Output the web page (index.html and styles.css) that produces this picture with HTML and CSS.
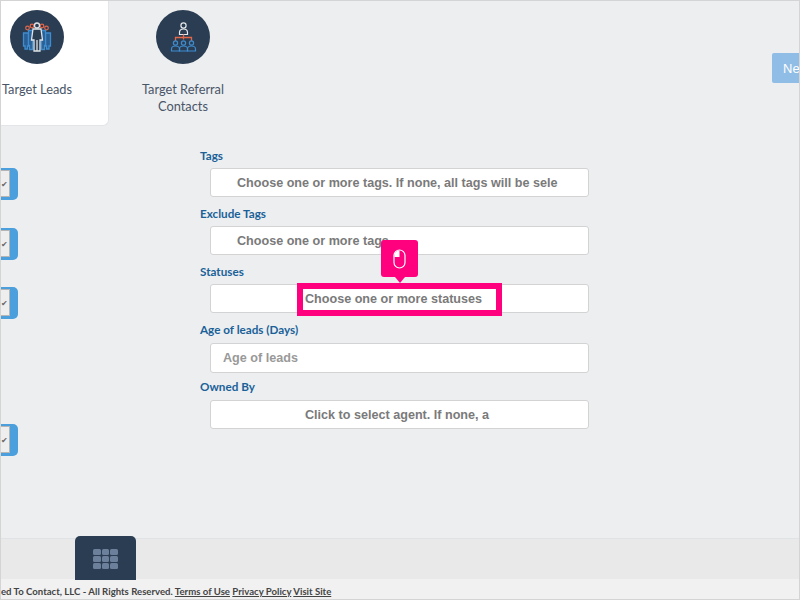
FILE: index.html
```html
<!DOCTYPE html>
<html lang="en">
<head>
    <meta charset="UTF-8">
    <meta name="viewport" content="width=device-width, initial-scale=1.0">
    <title>Target Leads</title>
    <link rel="stylesheet" href="styles.css">
</head>
<body>
    <div class="screen">
        <!-- Top tabs -->
        <div class="top">
            <div class="tabs">
                <div class="tab active">
                    <div class="tab-icon">
                        <svg width="54" height="54" viewBox="0 0 54 54" fill="none">
                            <g stroke="#e2674a" stroke-width="1.2">
                                <circle cx="17.500" cy="18" r="1.800"/>
                                <circle cx="22" cy="16" r="1.800"/>
                                <circle cx="32" cy="16" r="1.800"/>
                                <circle cx="36.500" cy="18" r="1.800"/>
                            </g>
                            <g stroke="#3f8ccf" stroke-width="1.300" fill="#2a5f94">
                                <path d="M13.500 23h5v13h-1v3h-2.500v-3h-1.500z"/>
                                <path d="M40.500 23h-5v13h1v3h2.500v-3h1.500z"/>
                                <path d="M18.500 20.500h4v19h-3v-4h-1z"/>
                                <path d="M35.500 20.500h-4v19h3v-4h1z"/>
                            </g>
                            <g stroke="#dfe3e8" stroke-width="1.300">
                                <circle cx="27" cy="15.500" r="2.500"/>
                                <path d="M23 19h8l1.500 11h-2.500v11h-6v-11h-2.500z" fill="#2b3d52"/>
                                <path d="M27 30v11"/>
                            </g>
                        </svg>
                    </div>
                    <div class="tab-label">Target Leads</div>
                </div>
                <div class="tab">
                    <div class="tab-icon">
                        <svg width="54" height="54" viewBox="0 0 54 54" fill="none">
                            <g stroke="#e4e7eb" stroke-width="1.200">
                                <circle cx="27.500" cy="15.500" r="2.600"/>
                                <path d="M23.500 24.500v-2c0-2 1.500-3.500 4-3.500s4 1.500 4 3.500v2z"/>
                            </g>
                            <path d="M27.500 24.500v5M19.500 31v-3.500h16v3.500" stroke="#e2674a" stroke-width="1.300"/>
                            <g stroke="#3f8ccf" stroke-width="1.200">
                                <circle cx="19.500" cy="33" r="2.100"/>
                                <circle cx="27.500" cy="33" r="2.100"/>
                                <circle cx="35.500" cy="33" r="2.100"/>
                                <path d="M15.500 41v-2c0-2 1.500-3 4-3s4 1 4 3v2z"/>
                                <path d="M23.500 41v-2c0-2 1.500-3 4-3s4 1 4 3v2z"/>
                                <path d="M31.500 41v-2c0-2 1.500-3 4-3s4 1 4 3v2z"/>
                            </g>
                        </svg>
                    </div>
                    <div class="tab-label">Target Referral<br>Contacts</div>
                </div>
            </div>
            <button class="next-btn">Ne</button>
        </div>

        <!-- Form area -->
        <div class="main">
            <div class="toggles">
                <div class="toggle"><span class="toggle-box">&#10004;</span></div>
                <div class="toggle"><span class="toggle-box">&#10004;</span></div>
                <div class="toggle"><span class="toggle-box">&#10004;</span></div>
                <div class="toggle toggle-last"><span class="toggle-box">&#10004;</span></div>
            </div>
            <div class="form">
                <div class="form-group">
                    <div class="form-label">Tags</div>
                    <div class="field indent-small">Choose one or more tags. If none, all tags will be sele</div>
                </div>
                <div class="form-group">
                    <div class="form-label">Exclude Tags</div>
                    <div class="field indent-small">Choose one or more tags</div>
                </div>
                <div class="form-group">
                    <div class="form-label">Statuses</div>
                    <div class="field indent-large">Choose one or more statuses</div>
                    <div class="highlight"></div>
                    <div class="hint">
                        <svg width="14" height="20" viewBox="0 0 14 20" fill="none">
                            <rect x="1" y="1" width="11" height="18" rx="5.500" stroke="#fff" stroke-width="1.200"/>
                            <path d="M6.500 1.500v6.500H1.500V6.500a5 5 0 0 1 5-5z" fill="#fff"/>
                        </svg>
                    </div>
                </div>
                <div class="form-group">
                    <div class="form-label form-label-tall">Age of leads (Days)</div>
                    <div class="field field-input">Age of leads</div>
                </div>
                <div class="form-group form-group-last">
                    <div class="form-label form-label-tall">Owned By</div>
                    <div class="field indent-large">Click to select agent. If none, a</div>
                </div>
            </div>
        </div>

        <!-- Bottom bar -->
        <div class="bottom-bar">
            <div class="grid-btn">
                <div class="grid-icon">
                    <i></i><i></i><i></i><i></i><i></i><i></i><i></i><i></i><i></i>
                </div>
            </div>
        </div>
        <div class="footer">
            <span class="footer-text">ed To Contact, LLC - All Rights Reserved. <a href="#">Terms of Use</a> <a href="#">Privacy Policy</a> <a href="#">Visit Site</a></span>
        </div>
    </div>
</body>
</html>
```

FILE: styles.css
```css
* {
    box-sizing: border-box;
}
html, body {
    margin: 0;
    padding: 0;
    overflow: hidden;
}
body {
    font-family: Lato, "Open Sans", sans-serif;
    background-color: #eceef0;
}
.screen {
    width: 800px;
    height: 600px;
    display: flex;
    flex-direction: column;
    overflow: hidden;
    border: 1px solid #d4d4d4;
}
.top {
    display: flex;
    justify-content: space-between;
    align-items: flex-start;
    height: 125px;
    flex-shrink: 0;
}
.tabs {
    display: flex;
    gap: 3px;
    margin-left: -35px;
}
.tab {
    width: 142px;
    height: 125px;
    padding-top: 9px;
    text-align: center;
}
.tab.active {
    width: 143px;
    padding-right: 1px;
    background: #ffffff;
    border-radius: 0 0 6px 0;
    border: 1px solid #e3e5e8;
    border-top: none;
}
.tab-icon {
    width: 54px;
    height: 54px;
    margin: 0 auto;
    border-radius: 50%;
    background: #2b3d52;
}
.tab-label {
    margin-top: 17px;
    font-size: 12.800px;
    line-height: 17px;
    color: #4a5568;
}
.next-btn {
    width: 34px;
    height: 30px;
    margin-top: 52px;
    margin-right: -7px;
    padding: 0 0 0 11px;
    border: none;
    border-radius: 2px;
    text-align: left;
    font-family: "Liberation Sans", Arial, sans-serif;
    font-size: 13px;
    color: #ffffff;
    background-color: #90bde6;
}
.main {
    flex: 1;
    display: flex;
    min-height: 0;
}
.toggles {
    width: 199px;
    padding-top: 42px;
    flex-shrink: 0;
}
.toggle {
    width: 18px;
    height: 32px;
    margin-left: -1px;
    margin-bottom: 27.500px;
    padding-top: 2px;
    background: #4a9fdc;
    border-radius: 0 5px 5px 0;
}
.toggle-last {
    margin-top: 104.500px;
}
.toggle-box {
    display: block;
    width: 10px;
    height: 27px;
    padding-left: 1px;
    line-height: 26px;
    font-size: 8px;
    text-align: left;
    color: #666666;
    background: #eeeeee;
    border: 1px solid #b5b5b5;
    border-left: none;
}
.form {
    width: 390px;
    padding-top: 22px;
}
.form-group {
    position: relative;
    height: 58px;
}
.form-group-last {
    margin-top: -1px;
}
.form-label {
    height: 20px;
    font-size: 11.700px;
    font-weight: 700;
    line-height: 15px;
    color: #1a6198;
}
.form-label-tall {
    height: 21px;
}
.field {
    margin-left: 10px;
    width: 379px;
    height: 29px;
    line-height: 28px;
    overflow: hidden;
    white-space: nowrap;
    font-family: "Liberation Sans", Arial, sans-serif;
    font-size: 12.600px;
    font-weight: 700;
    color: #7a7a7a;
    background: #ffffff;
    border: 1px solid #d3d3d3;
    border-radius: 3px;
}
.indent-small {
    padding-left: 26px;
}
.indent-large {
    padding-left: 94px;
}
.field-input {
    height: 30px;
    padding-left: 12px;
    color: #999999;
}
.highlight {
    position: absolute;
    left: 97px;
    top: 19px;
    width: 205px;
    height: 33px;
    border: 6px solid #ff007f;
}
.hint {
    position: absolute;
    left: 181px;
    top: -24px;
    width: 37px;
    height: 37px;
    display: flex;
    align-items: center;
    justify-content: center;
    background: #ff007f;
    border-radius: 3px;
}
.hint::after {
    content: "";
    position: absolute;
    left: 14px;
    bottom: -6px;
    border-left: 5px solid transparent;
    border-right: 5px solid transparent;
    border-top: 6px solid #ff007f;
}
.bottom-bar {
    height: 41px;
    flex-shrink: 0;
    background: #e9e9e9;
    border-top: 1px solid #e0e3e6;
    position: relative;
}
.grid-btn {
    position: absolute;
    left: 74px;
    top: -3px;
    width: 61px;
    height: 44px;
    display: flex;
    justify-content: center;
    padding-top: 13px;
    background: #2b3d52;
    border-radius: 5px 5px 0 0;
}
.grid-icon {
    display: grid;
    grid-template-columns: repeat(3, 7.500px);
    grid-template-rows: repeat(3, 6px);
    gap: 1px;
}
.grid-icon i {
    display: block;
    background: #6d809b;
    border-radius: 1.500px;
}
.footer {
    height: 20px;
    flex-shrink: 0;
    background: #f1f1f1;
    font-size: 9.600px;
    font-weight: 700;
    line-height: 26px;
    color: #444444;
    white-space: nowrap;
    overflow: hidden;
}
.footer a {
    color: #444444;
}
```
